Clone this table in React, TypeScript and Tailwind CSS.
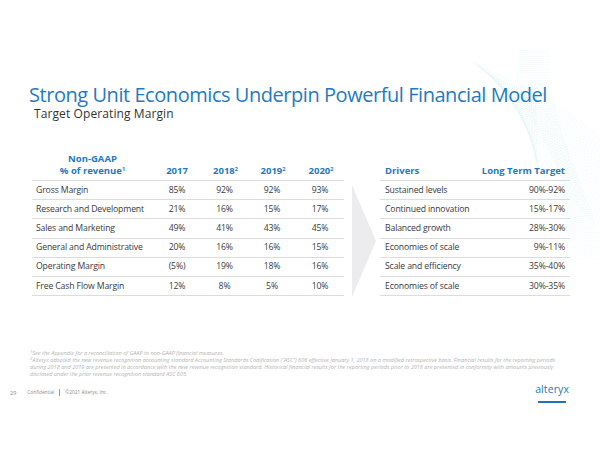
import React from "react";

const left = [
  ["Gross Margin", "85%", "92%", "92%", "93%"],
  ["Research and Development", "21%", "16%", "15%", "17%"],
  ["Sales and Marketing", "49%", "41%", "43%", "45%"],
  ["General and Administrative", "20%", "16%", "16%", "15%"],
  ["Operating Margin", "(5%)", "19%", "18%", "16%"],
  ["Free Cash Flow Margin", "12%", "8%", "5%", "10%"],
];

const right = [
  ["Sustained levels", "90%-92%"],
  ["Continued innovation", "15%-17%"],
  ["Balanced growth", "28%-30%"],
  ["Economies of scale", "9%-11%"],
  ["Scale and efficiency", "35%-40%"],
  ["Economies of scale", "30%-35%"],
];

function Waves() {
  const lines = [];
  for (let i = 0; i < 28; i++) {
    const o = i * 4;
    lines.push(
      <path
        key={i}
        d={`M ${470 + o * 0.6} ${60 + o * 0.3} C ${520 + o * 0.2} ${100 + o}, ${560 - o * 0.4} ${90 + o * 0.5}, ${610} ${150 + o * 0.8}`}
        fill="none"
        stroke="#8fd3d8"
        strokeWidth="0.4"
        strokeDasharray="0.8 1.2"
        opacity="0.45"
      />
    );
  }
  for (let i = 0; i < 20; i++) {
    const o = i * 5;
    lines.push(
      <path
        key={"b" + i}
        d={`M ${520 + o * 0.3} 50 C ${500 + o * 0.5} ${120}, ${590 - o * 0.2} ${150}, ${560 + o * 0.5} ${260}`}
        fill="none"
        stroke="#9dd8dc"
        strokeWidth="0.4"
        strokeDasharray="0.8 1.2"
        opacity="0.35"
      />
    );
  }
  return (
    <svg className="absolute left-0 top-0" width="600" height="463" viewBox="0 0 600 463">
      {lines}
    </svg>
  );
}

export default function App() {
  const font = { fontFamily: '"Open Sans", "Noto Sans", sans-serif' } as React.CSSProperties;
  return (
    <div className="relative w-[600px] h-[463px] overflow-hidden bg-white" style={font}>
      <Waves />
      <div className="relative flex w-[600px] flex-col">
        <div className="pl-[29px] pt-[84px]">
          <div className="whitespace-nowrap text-[20px] leading-[22px] tracking-[-0.45px] text-[#1f7ac0]">
            Strong Unit Economics Underpin Powerful Financial Model
          </div>
          <div className="mt-[1px] pl-[5px] text-[12px] leading-[14px] tracking-[0.1px] text-[#333333]">
            Target Operating Margin
          </div>
        </div>

        <div className="mt-[29px] grid grid-cols-[312px_36px_190px] pl-[32px] pr-[30px]">
          {/* left table */}
          <div>
            <div className="flex h-[31px] items-end border-b border-[#dcdcdc] pb-[3px] text-[9.5px] font-bold leading-[12px] text-[#1f7ac0]">
              <div className="w-[121px] shrink-0 text-center">
                <div>Non-GAAP</div>
                <div>
                  % of revenue<sup className="text-[5.5px]">1</sup>
                </div>
              </div>
              <div className="w-[48px] shrink-0 text-center">2017</div>
              <div className="w-[47px] shrink-0 text-center pl-[2px]">
                2018<sup className="text-[5.5px]">2</sup>
              </div>
              <div className="w-[48px] shrink-0 text-center pl-[2px]">
                2019<sup className="text-[5.5px]">2</sup>
              </div>
              <div className="w-[48px] shrink-0 text-center pl-[2px]">
                2020<sup className="text-[5.5px]">2</sup>
              </div>
            </div>
            {left.map((r, i) => (
              <div
                key={i}
                className="flex h-[19.2px] items-center border-b border-[#dcdcdc] text-[8.7px] tracking-[-0.15px] text-[#3a3a3a]"
              >
                <div className="w-[121px] shrink-0 pl-[4px]">{r[0]}</div>
                <div className="w-[48px] shrink-0 text-center">{r[1]}</div>
                <div className="w-[47px] shrink-0 text-center">{r[2]}</div>
                <div className="w-[48px] shrink-0 text-center">{r[3]}</div>
                <div className="w-[48px] shrink-0 text-center">{r[4]}</div>
              </div>
            ))}
          </div>

          {/* arrow */}
          <div className="pl-[8px] pt-[35px]">
            <svg width="24" height="112" viewBox="0 0 24 112">
              <polygon points="0,0 24,56 0,112" fill="#ececee" />
            </svg>
          </div>

          {/* right table */}
          <div>
            <div className="flex h-[31px] items-end justify-between border-b border-[#dcdcdc] pb-[3px] pl-[5px] pr-[5px] text-[9.5px] font-bold leading-[12px] text-[#1f7ac0]">
              <div>Drivers</div>
              <div>Long Term Target</div>
            </div>
            {right.map((r, i) => (
              <div
                key={i}
                className="flex h-[19.2px] items-center justify-between border-b border-[#dcdcdc] pl-[5px] pr-[5px] text-[8.7px] tracking-[-0.15px] text-[#3a3a3a]"
              >
                <div>{r[0]}</div>
                <div>{r[1]}</div>
              </div>
            ))}
          </div>
        </div>

        <div className="mt-[53px] whitespace-nowrap pl-[30px] text-[5.55px] italic leading-[6.9px] text-[#b3b3b3]">
          <div>
            <sup>1</sup>See the Appendix for a reconciliation of GAAP to non-GAAP financial measures.
          </div>
          <div>
            <sup>2</sup>Alteryx adopted the new revenue recognition accounting standard Accounting Standards Codification (“ASC”) 606 effective January 1, 2018 on a modified retrospective basis. Financial results for the reporting periods
          </div>
          <div>
            during 2018 and 2019 are presented in accordance with the new revenue recognition standard. Historical financial results for the reporting periods prior to 2018 are presented in conformity with amounts previously
          </div>
          <div>disclosed under the prior revenue recognition standard ASC 605.</div>
        </div>

        <div className="flex items-start justify-between pl-[10px] pr-[31px]">
          <div className="mt-[11px] flex items-center text-[4.8px] text-[#8a8a8a]">
            <span className="text-[5.5px]">29</span>
            <span className="ml-[11px]">Confidential</span>
            <span className="mx-[5px] h-[7px] w-px bg-[#9a9a9a]" />
            <span>©2021 Alteryx, Inc.</span>
          </div>
          <div className="mt-[5px] flex flex-col items-center">
            <div className="text-[10.5px] leading-[12px] tracking-[0.1px] text-[#2a78b8]">alteryx</div>
            <div className="mt-[6px] h-[2.5px] w-[28px] bg-[#1f72b8]" />
          </div>
        </div>
      </div>
    </div>
  );
}
